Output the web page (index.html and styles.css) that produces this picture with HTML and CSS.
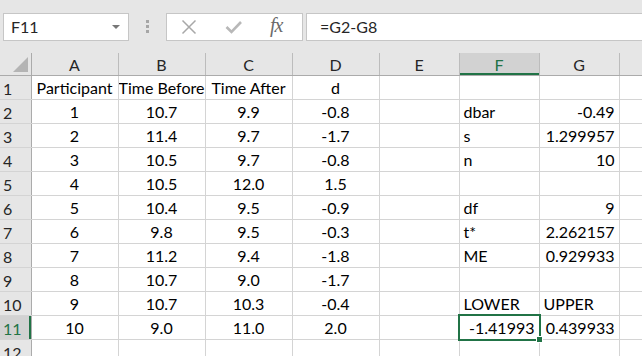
FILE: index.html
```html
<!DOCTYPE html>
<html>
<head>
<meta charset="utf-8">
<title>Paired t interval</title>
<link rel="stylesheet" href="styles.css">
</head>
<body>

<!-- name box + formula bar -->
<div class="toolbar">
    <div class="nameBox">
        <span class="nameText">F11</span>
        <span class="caret"></span>
    </div>
    <div class="grip"><i></i><i></i><i></i></div>
    <div class="fxButtons">
        <svg class="cancel" width="16" height="16" viewBox="0 0 16 16"><path d="M1.5 1.5 L14.5 14.5 M14.5 1.5 L1.5 14.5" stroke="#a8a8a8" stroke-width="1.5" fill="none"/></svg>
        <svg class="enter" width="18" height="16" viewBox="0 0 18 16"><path d="M1.5 8 L6.5 13 L16 3" stroke="#b8b8b8" stroke-width="2.6" fill="none"/></svg>
        <span class="fx">fx</span>
    </div>
    <div class="formula">=G2-G8</div>
</div>

<table class="sheet">
    <colgroup>
        <col class="rowHeadCol">
        <col class="wide"><col class="wide"><col class="wide"><col class="wide">
        <col class="narrow"><col class="narrow"><col class="narrow">
        <col class="rest">
    </colgroup>
    <tr class="colHeads">
        <th class="corner"><span class="tri"></span></th>
        <th>A</th><th>B</th><th>C</th><th>D</th><th>E</th><th class="sel">F</th><th>G</th><th></th>
    </tr>
    <tr><th>1</th><td class="c">Participant</td><td class="c">Time Before</td><td class="c">Time After</td><td class="c">d</td><td></td><td></td><td></td><td></td></tr>
    <tr><th>2</th><td class="c">1</td><td class="c">10.7</td><td class="c">9.9</td><td class="c">-0.8</td><td></td><td>dbar</td><td class="r">-0.49</td><td></td></tr>
    <tr><th>3</th><td class="c">2</td><td class="c">11.4</td><td class="c">9.7</td><td class="c">-1.7</td><td></td><td>s</td><td class="r">1.299957</td><td></td></tr>
    <tr><th>4</th><td class="c">3</td><td class="c">10.5</td><td class="c">9.7</td><td class="c">-0.8</td><td></td><td>n</td><td class="r">10</td><td></td></tr>
    <tr><th>5</th><td class="c">4</td><td class="c">10.5</td><td class="c">12.0</td><td class="c">1.5</td><td></td><td></td><td></td><td></td></tr>
    <tr><th>6</th><td class="c">5</td><td class="c">10.4</td><td class="c">9.5</td><td class="c">-0.9</td><td></td><td>df</td><td class="r">9</td><td></td></tr>
    <tr><th>7</th><td class="c">6</td><td class="c">9.8</td><td class="c">9.5</td><td class="c">-0.3</td><td></td><td>t*</td><td class="r">2.262157</td><td></td></tr>
    <tr><th>8</th><td class="c">7</td><td class="c">11.2</td><td class="c">9.4</td><td class="c">-1.8</td><td></td><td>ME</td><td class="r">0.929933</td><td></td></tr>
    <tr><th>9</th><td class="c">8</td><td class="c">10.7</td><td class="c">9.0</td><td class="c">-1.7</td><td></td><td></td><td></td><td></td></tr>
    <tr><th>10</th><td class="c">9</td><td class="c">10.7</td><td class="c">10.3</td><td class="c">-0.4</td><td></td><td>LOWER</td><td>UPPER</td><td></td></tr>
    <tr><th class="sel">11</th><td class="c">10</td><td class="c">9.0</td><td class="c">11.0</td><td class="c">2.0</td><td></td><td class="r active">-1.41993<span class="handle"></span></td><td class="r">0.439933</td><td></td></tr>
    <tr><th>12</th><td></td><td></td><td></td><td></td><td></td><td></td><td></td><td></td></tr>
</table>

</body>
</html>
```

FILE: styles.css
```css
/* spreadsheet look, Excel 2016 colours */
body
{
    margin:             0;
    background-color:   #ffffff;
    font-family:        Lato, "Open Sans", sans-serif;
    overflow:           hidden;
}

.toolbar
{
    display:            flex;
    align-items:        center;
    height:             53px;
    background-color:   #e6e6e6;
    padding-left:       3px;
    box-sizing:         border-box;
}

.nameBox, .fxButtons, .formula
{
    height:             28px;
    box-sizing:         border-box;
    border:             1px solid #c6c6c6;
    background-color:   #ffffff;
    display:            flex;
    align-items:        center;
}

.nameBox
{
    width:              126px;
    padding:            0 8px 0 7px;
    justify-content:    space-between;
    font-size:          16px;
    color:              #262626;
}

.caret
{
    width:              0;
    height:             0;
    border-left:        4px solid transparent;
    border-right:       4px solid transparent;
    border-top:         4px solid #777777;
}

.grip
{
    width:              37px;
    display:            flex;
    flex-direction:     column;
    align-items:        center;
    gap:                2px;
}

.grip i
{
    width:              3px;
    height:             3px;
    background-color:   #a6a6a6;
}

.fxButtons
{
    width:              137px;
    padding:            0 0 0 14px;
}

.cancel     { margin-right: 28px; }
.enter      { margin-right: 27px; }

.fx
{
    font-family:        "Liberation Serif", serif;
    font-style:         italic;
    font-size:          20px;
    color:              #6b6b6b;
    letter-spacing:     -1px;
    margin-top:         -3px;
}

.formula
{
    flex:               1;
    margin-left:        3px;
    border-right:       0;
    padding-left:       13px;
    font-size:          16px;
    color:              #262626;
}

.sheet
{
    border-collapse:    collapse;
    table-layout:       fixed;
    width:              642px;
    font-size:          16px;
    color:              #000000;
}

.rowHeadCol { width: 31px; }
.wide       { width: 87px; }
.narrow     { width: 80px; }
.rest       { width: 23px; }

.sheet td
{
    height:             22px;
    padding:            0 4px 1px 4px;
    border:             1px solid #d4d4d4;
    vertical-align:     bottom;
    white-space:        nowrap;
    overflow:           hidden;
    line-height:        20px;
}

.sheet td.c { text-align: center; padding: 0 0 1px 0; }
.sheet td.r { text-align: right; }

.sheet th
{
    background-color:   #e6e6e6;
    font-weight:        normal;
    color:              #262626;
    border:             1px solid #bcbcbc;
    border-top:         0;
    padding:            0;
    vertical-align:     bottom;
    line-height:        21px;
}

.sheet tr th:first-child
{
    text-align:         left;
    padding-left:       3px;
    border-left:        0;
    border-right:       1px solid #ababab;
    border-bottom:      1px solid #d4d4d4;
}

.colHeads th
{
    height:             22px;
    border-bottom:      1px solid #ababab;
}

.sheet .colHeads th:first-child
{
    border-bottom:      1px solid #ababab;
}

.corner
{
    position:           relative;
}

.tri
{
    position:           absolute;
    right:              3px;
    bottom:             3px;
    width:              0;
    height:             0;
    border-left:        15px solid transparent;
    border-bottom:      15px solid #b4b4b4;
}

.sheet th.sel
{
    background-color:   #d2d2d2;
    color:              #217346;
}

.colHeads th.sel
{
    box-shadow:         inset 0 -2px 0 #217346;
}

.sheet tr th.sel:first-child
{
    box-shadow:         inset -2px 0 0 #217346;
}

.sheet td.active
{
    position:           relative;
    overflow:           visible;
}

.sheet td.active::after
{
    content:            "";
    position:           absolute;
    left:               -2px;
    top:                -2px;
    right:              -2px;
    bottom:             -2px;
    border:             2px solid #217346;
}

.handle
{
    position:           absolute;
    right:              -4px;
    bottom:             -4px;
    width:              5px;
    height:             5px;
    background-color:   #217346;
    border:             1px solid #ffffff;
    z-index:            2;
}
```
